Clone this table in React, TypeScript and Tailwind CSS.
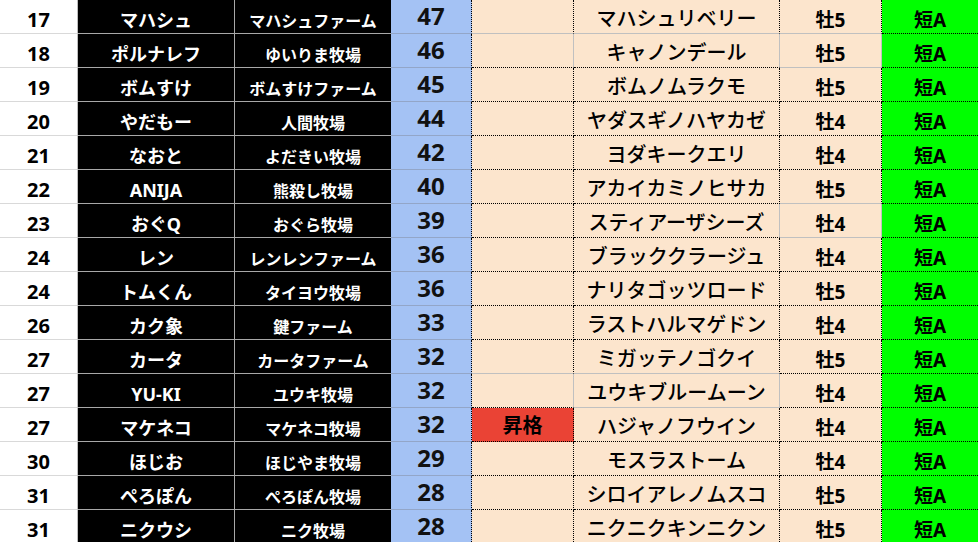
type Edge = 'd' | 'g';

type Row = {
  rank: number;
  owner: string;
  farm: string;
  pts: number;
  status?: string;
  horse: string;
  sex: string;
  dist: string;
  // right / bottom edges of status, horse, sex cells ('g' = plain grid line)
  e?: { sr?: Edge; sb?: Edge; hr?: Edge; hb?: Edge; xr?: Edge; xb?: Edge };
};

const ROWS: Row[] = [
  { rank: 17, owner: 'マハシュ', farm: 'マハシュファーム', pts: 47, horse: 'マハシュリベリー', sex: '牡5', dist: '短A', e: { sb: 'g', hb: 'g', xb: 'g' } },
  { rank: 18, owner: 'ポルナレフ', farm: 'ゆいりま牧場', pts: 46, horse: 'キャノンデール', sex: '牡5', dist: '短A', e: { sr: 'g', hr: 'g', xr: 'g', xb: 'g' } },
  { rank: 19, owner: 'ボムすけ', farm: 'ボムすけファーム', pts: 45, horse: 'ボムノムラクモ', sex: '牡5', dist: '短A' },
  { rank: 20, owner: 'やだもー', farm: '人間牧場', pts: 44, horse: 'ヤダスギノハヤカゼ', sex: '牡4', dist: '短A' },
  { rank: 21, owner: 'なおと', farm: 'よだきい牧場', pts: 42, horse: 'ヨダキークエリ', sex: '牡4', dist: '短A' },
  { rank: 22, owner: 'ANIJA', farm: '熊殺し牧場', pts: 40, horse: 'アカイカミノヒサカ', sex: '牡5', dist: '短A', e: { xb: 'g' } },
  { rank: 23, owner: 'おぐQ', farm: 'おぐら牧場', pts: 39, horse: 'スティアーザシーズ', sex: '牡4', dist: '短A', e: { hr: 'g', xr: 'g', xb: 'g' } },
  { rank: 24, owner: 'レン', farm: 'レンレンファーム', pts: 36, horse: 'ブラッククラージュ', sex: '牡4', dist: '短A' },
  { rank: 24, owner: 'トムくん', farm: 'タイヨウ牧場', pts: 36, horse: 'ナリタゴッツロード', sex: '牡5', dist: '短A' },
  { rank: 26, owner: 'カク象', farm: '鍵ファーム', pts: 33, horse: 'ラストハルマゲドン', sex: '牡4', dist: '短A' },
  { rank: 27, owner: 'カータ', farm: 'カータファーム', pts: 32, horse: 'ミガッテノゴクイ', sex: '牡5', dist: '短A', e: { sb: 'g', hb: 'g' } },
  { rank: 27, owner: 'YU-KI', farm: 'ユウキ牧場', pts: 32, horse: 'ユウキブルームーン', sex: '牡4', dist: '短A', e: { sr: 'g', hr: 'g', hb: 'g' } },
  { rank: 27, owner: 'マケネコ', farm: 'マケネコ牧場', pts: 32, status: '昇格', horse: 'ハジャノフウイン', sex: '牡4', dist: '短A' },
  { rank: 30, owner: 'ほじお', farm: 'ほじやま牧場', pts: 29, horse: 'モスラストーム', sex: '牡4', dist: '短A' },
  { rank: 31, owner: 'ぺろぽん', farm: 'ぺろぽん牧場', pts: 28, horse: 'シロイアレノムスコ', sex: '牡5', dist: '短A' },
  { rank: 31, owner: 'ニクウシ', farm: 'ニク牧場', pts: 28, horse: 'ニクニクキンニクン', sex: '牡5', dist: '短A' },
];

const rightEdge = (e: Edge = 'd') =>
  e === 'd' ? '[border-right-style:dotted] border-r-black' : '[border-right-style:solid] border-r-[#c0c0c0]';
const bottomEdge = (e: Edge = 'd') =>
  e === 'd' ? '[border-bottom-style:dotted] border-b-black' : '[border-bottom-style:solid] border-b-[#c0c0c0]';

const cell = 'flex h-[34px] items-end justify-center leading-none whitespace-nowrap';

export default function App() {
  return (
    <div
      className="grid h-[542px] w-[978px] grid-cols-[78px_157px_156px_81px_102px_206px_102px_96px] overflow-hidden bg-white"
      style={{ fontFamily: '"Noto Sans", "Noto Sans CJK JP", sans-serif' }}
    >
      {ROWS.map((r, i) => {
        const e = r.e ?? {};
        return [
          <div key={`${i}a`} className={`${cell} border-r border-b border-r-[#bdbdbd] border-b-[#d9d9d9] pb-[3px] text-[20px] font-bold text-black`}>
            {r.rank}
          </div>,
          <div key={`${i}b`} className={`${cell} border-r border-b border-[#a8a8a8] bg-black pb-[4px] text-[18px] font-bold text-white`}>
            {r.owner}
          </div>,
          <div key={`${i}c`} className={`${cell} border-b border-[#a8a8a8] bg-black pb-[4px] text-[16px] font-bold text-white`}>
            {r.farm}
          </div>,
          <div
            key={`${i}d`}
            className={`${cell} border-r border-b [border-right-style:dotted] border-r-black border-b-[#93a6c8] bg-[#a4c2f4] pb-[5px] text-[24px] font-bold text-[#111]`}
          >
            {r.pts}
          </div>,
          <div
            key={`${i}e`}
            className={`${cell} border-r border-b ${rightEdge(e.sr)} ${bottomEdge(e.sb)} ${r.status ? 'bg-[#ea4335]' : 'bg-[#fce5cd]'} pb-[5px] text-[20px] font-bold text-black`}
          >
            {r.status ?? ''}
          </div>,
          <div key={`${i}f`} className={`${cell} border-r border-b ${rightEdge(e.hr)} ${bottomEdge(e.hb)} bg-[#fce5cd] pb-[4px] text-[20px] font-medium text-black`}>
            {r.horse}
          </div>,
          <div key={`${i}g`} className={`${cell} border-r border-b ${rightEdge(e.xr)} ${bottomEdge(e.xb)} bg-[#fce5cd] pb-[3px] text-[19px] font-bold text-black`}>
            {r.sex}
          </div>,
          <div key={`${i}h`} className={`${cell} border-b [border-bottom-style:dotted] border-b-black bg-[#00ff00] pb-[3px] text-[19px] font-bold text-black`}>
            {r.dist}
          </div>,
        ];
      })}
    </div>
  );
}
